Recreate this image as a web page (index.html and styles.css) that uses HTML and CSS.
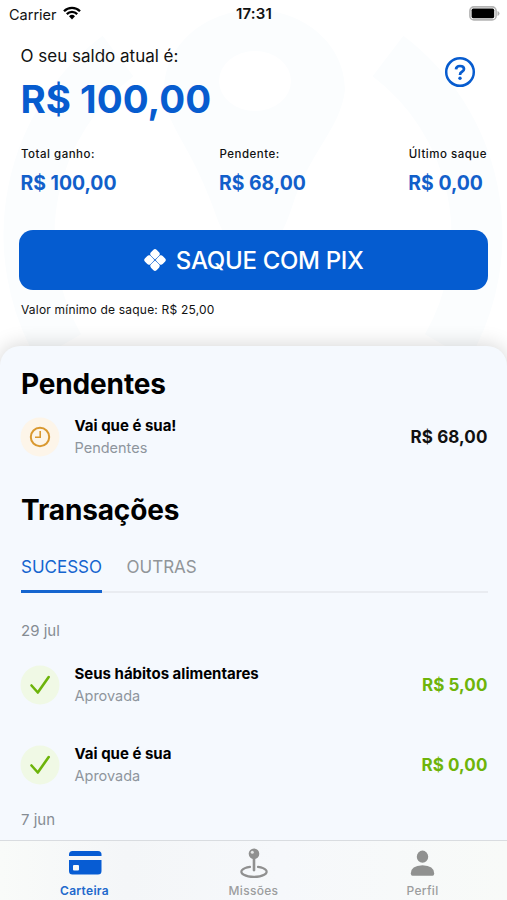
FILE: index.html
```html
<!DOCTYPE html>
<html lang="pt-BR">
<head>
<meta charset="utf-8">
<meta name="viewport" content="width=device-width, initial-scale=1">
<title>Carteira</title>
<link rel="stylesheet" href="styles.css">
</head>
<body>
<div class="app">
  <svg class="watermark" viewBox="0 0 507 346" aria-hidden="true">
    <path class="ring" d="M118 56A224.5 224.5 0 0 0 59 347M388 56A224.5 224.5 0 0 1 447 347"/>
    <path fill-rule="evenodd" d="M255 10C200 10 158 52 165 100C170 130 190 145 213 207C222 235 235 255 252 262C270 255 283 235 292 207C310 150 340 130 345 90C345 45 305 10 255 10ZM219 81A36 30 0 1 0 291 81A36 30 0 1 0 219 81Z"/>
  </svg>
  <header class="status">
    <div class="carrier"><span>Carrier</span>
      <svg width="18" height="14" viewBox="0 0 18 14"><g fill="none" stroke="#000" stroke-width="2.3"><path d="M1 5.2A11.3 11.3 0 0 1 17 5.2"/><path d="M3.8 8.1A7.3 7.3 0 0 1 14.2 8.1"/></g><path d="M6 10.2A4.3 4.3 0 0 1 12 10.2L9 13.5Z"/></svg>
    </div>
    <span class="time">17:31</span>
    <svg class="battery" width="31" height="15" viewBox="0 0 31 15"><rect x=".9" y=".9" width="26.2" height="13" rx="4" fill="#fff" stroke="#b4b4b4" stroke-width="1.6"/><rect x="2.6" y="2.6" width="22.6" height="9.600" rx="1.600"/><path d="M28.5 5v5q2-.8 2-2.5T28.5 5Z" fill="#b0b0b0"/></svg>
  </header>

  <section class="summary">
    <div class="balance">
      <div>
        <p class="balance-label">O seu saldo atual é:</p>
        <p class="balance-value">R$ 100,00</p>
      </div>
      <svg class="help" width="32" height="32" viewBox="0 0 32 32" fill="none" stroke="#075ccf"><circle cx="16" cy="16" r="13.8" stroke-width="2.5"/><path d="M12 13.300Q12.200 10 16 10Q20 10 20 12.900Q20 14.600 18 15.700Q16 16.800 16 18.900" stroke-width="2.7"/><circle cx="16" cy="22.3" r="1.7" fill="#075ccf" stroke="none"/></svg>
    </div>
    <div class="stats">
      <div class="stat"><p class="stat-label">Total ganho:</p><p class="stat-value">R$ 100,00</p></div>
      <div class="stat"><p class="stat-label">Pendente:</p><p class="stat-value">R$ 68,00</p></div>
      <div class="stat"><p class="stat-label">Último saque</p><p class="stat-value">R$ 0,00</p></div>
    </div>
    <button class="withdraw">
      <svg width="24" height="24" viewBox="0 0 24 24"><g transform="rotate(45 12 12)" fill="#fff"><rect x="3.700" y="3.700" width="7.900" height="7.900" rx="2.200"/><rect x="12.400" y="3.700" width="7.900" height="7.900" rx="2.200"/><rect x="3.700" y="12.400" width="7.900" height="7.900" rx="2.200"/><rect x="12.400" y="12.400" width="7.900" height="7.900" rx="2.200"/><path d="M7 5h4.600v6.600H5V7ZM12.400 5H17l2 2v4.600h-6.600ZM5 12.400h6.600V19H7l-2-2ZM12.400 12.400H19V17l-2 2h-4.600Z"/></g></svg>
      <span>SAQUE COM PIX</span>
    </button>
    <p class="minimum">Valor mínimo de saque: R$ 25,00</p>
  </section>

  <main class="sheet">
    <h2 class="title">Pendentes</h2>
    <div class="row row-pending">
      <svg class="badge" viewBox="0 0 40 40"><circle cx="20" cy="20" r="19.5" fill="#fdf5e9"/><g fill="none" stroke="#d9982f"><circle cx="20" cy="20" r="9.2" stroke-width="2"/><path d="M20.2 14V20.3H15" stroke-width="1.6"/></g></svg>
      <div class="info"><p class="name">Vai que é sua!</p><p class="state">Pendentes</p></div>
      <span class="amount">R$ 68,00</span>
    </div>
    <h2 class="title title-transactions">Transações</h2>
    <nav class="tabs"><span class="tab tab-active">SUCESSO</span><span class="tab">OUTRAS</span></nav>
    <p class="date">29 jul</p>
    <div class="row">
      <svg class="badge" viewBox="0 0 40 40"><circle cx="20" cy="20" r="19.5" fill="#f0f9e5"/><path d="M11.500 20.500L17.800 27.500L28.700 12" fill="none" stroke="#6db40a" stroke-width="2.600" stroke-linecap="round" stroke-linejoin="round"/></svg>
      <div class="info"><p class="name">Seus hábitos alimentares</p><p class="state">Aprovada</p></div>
      <span class="amount amount-ok">R$ 5,00</span>
    </div>
    <div class="row">
      <svg class="badge" viewBox="0 0 40 40"><circle cx="20" cy="20" r="19.5" fill="#f0f9e5"/><path d="M11.500 20.500L17.800 27.500L28.700 12" fill="none" stroke="#6db40a" stroke-width="2.600" stroke-linecap="round" stroke-linejoin="round"/></svg>
      <div class="info"><p class="name">Vai que é sua</p><p class="state">Aprovada</p></div>
      <span class="amount amount-ok">R$ 0,00</span>
    </div>
    <p class="date date-last">7 jun</p>
  </main>

  <nav class="tabbar">
    <div class="item item-active">
      <svg width="36" height="32" viewBox="0 0 36 32" fill="#075cd3"><path d="M2 9V7.500Q2 4 5.500 4H31Q34.500 4 34.500 7.500V9Z"/><path fill-rule="evenodd" d="M2 13H34.500V24Q34.500 27.500 31 27.500H5.500Q2 27.500 2 24ZM7 18Q6 18 6 19V22.500Q6 23.500 7 23.500H11Q12 23.500 12 22.500V19Q12 18 11 18Z"/></svg>
      <span>Carteira</span>
    </div>
    <div class="item">
      <svg width="36" height="32" viewBox="0 0 36 32"><path d="M14 19.800A12.600 5.200 0 1 0 22 19.800" fill="none" stroke="#909090" stroke-width="2.200" stroke-linecap="round"/><path d="M16.700 11H19.300V23.500Q18 25.500 16.700 23.500Z" fill="#909090"/><circle cx="18" cy="6.700" r="5.300" fill="#909090"/><circle cx="16.300" cy="5.300" r="1.500" fill="#e5e6e6"/></svg>
      <span>Missões</span>
    </div>
    <div class="item">
      <svg width="36" height="32" viewBox="0 0 36 32" fill="#909190"><ellipse cx="17.500" cy="9.700" rx="5.700" ry="6.100"/><path d="M5.800 26.500Q5.800 18.700 17.500 18.300Q29.200 18.700 29.200 26.500Q29.200 28.700 27.500 28.700H7.500Q5.800 28.700 5.800 26.500Z"/></svg>
      <span>Perfil</span>
    </div>
  </nav>
</div>
</body>
</html>
```
FILE: styles.css
```css
* { box-sizing: border-box; }
body { margin: 0; background: #fff; color: #111; font-family: Inter, "Liberation Sans", sans-serif; }
p, h2 { margin: 0; white-space: nowrap; }
svg { display: block; flex: none; }
.app { position: relative; height: 900px; overflow: hidden; display: flex; flex-direction: column; }
.watermark { position: absolute; top: 0; left: 0; width: 507px; height: 346px; fill: #fbfdfe; }
.ring { fill: none; stroke: #fbfdfe; stroke-width: 51; }
.status, .summary { position: relative; flex: none; }

.status { height: 28px; display: grid; grid-template-columns: 1fr auto 1fr; align-items: center; padding: 0 7px 0 9px; font-size: 14.5px; }
.carrier { display: flex; align-items: center; gap: 6px; }
.carrier svg { margin-top: -2px; }
.time { font-size: 15px; font-weight: 600; letter-spacing: .2px; margin-left: -1px; margin-top: -1px; }
.battery { justify-self: end; margin-top: -1px; }

.summary { height: 318px; padding: 0 19.5px 0 19px; }
.balance { display: flex; justify-content: space-between; padding: 17.5px 11.5px 0 2px; }
.balance-label { font-size: 17px; line-height: 20px; margin-left: -.5px; }
.balance-value { font-size: 38.5px; font-weight: 700; line-height: 44px; margin-top: 11px; margin-left: -.5px; color: #075ccf; }
.help { margin-top: 10.500px; }
.stats { display: flex; justify-content: space-between; margin: 26.5px 0 0 2px; }
.stat-label { font-size: 11.5px; font-weight: 500; line-height: 14px; letter-spacing: .5px; margin-right: .5px; }
.stat-value { font-size: 19.4px; font-weight: 700; line-height: 24px; margin-top: 10px; margin-left: -.5px; color: #125fca; }
.withdraw { display: flex; align-items: center; justify-content: center; gap: 9px; width: 100%; height: 60px; margin: 35px 0 0; padding: 0; border: 0; border-radius: 14px; background: #055cd0; color: #fff; font: 500 24px Inter, sans-serif; letter-spacing: -.3px; }
.minimum { margin: 12px 0 0 2px; font-size: 12px; line-height: 16px; letter-spacing: .2px; }

.sheet { position: relative; flex: 1; min-height: 0; padding: 21px 19.5px 0 21px; border-radius: 20px 20px 0 0; background: #f5f9fe; box-shadow: 0 -1px 20px rgba(0, 0, 0, .17); }
.title { font-size: 28px; line-height: 34px; font-weight: 700; letter-spacing: -.15px; color: #000; }
.row { display: flex; align-items: center; height: 40px; margin-bottom: 40.5px; }
.row-pending { margin: 15.5px 0 0; }
.badge { width: 40px; height: 40px; margin-left: -1px; }
.info { flex: 1; margin-left: 14.5px; }
.name { font-size: 15px; line-height: 22px; font-weight: 700; color: #000; }
.state { font-size: 14.5px; line-height: 22px; color: #8e959d; }
.amount { font-size: 17px; font-weight: 700; letter-spacing: .1px; color: #111; }
.amount-ok { color: #6eb40a; }
.title-transactions { margin-top: 36px; }
.tabs { display: flex; gap: 24.5px; height: 66px; border-bottom: 2px solid #e9ecf1; }
.tab { height: 66px; padding-top: 29px; font-size: 17px; line-height: 22px; color: #919599; }
.tab-active { color: #1565cf; border-bottom: 3px solid #1565cf; }
.date { margin-top: 28px; margin-bottom: 24px; font-size: 15px; line-height: 20px; color: #858c93; }
.date-last { margin-top: -15.5px; }

.tabbar { position: relative; flex: none; display: flex; height: 60px; border-top: 1px solid #d9dce0; background: linear-gradient(90deg, #f9fbf9, #f4f6f8 25%, #f6f8fb 55%, #f8faf8); }
.item { flex: 1; display: flex; flex-direction: column; align-items: center; padding-top: 6px; font-size: 12px; line-height: 16px; font-weight: 500; color: #9c9d9e; }
.item span { margin-top: 4px; letter-spacing: .3px; }
.item-active { color: #2269cc; font-weight: 600; }
```
